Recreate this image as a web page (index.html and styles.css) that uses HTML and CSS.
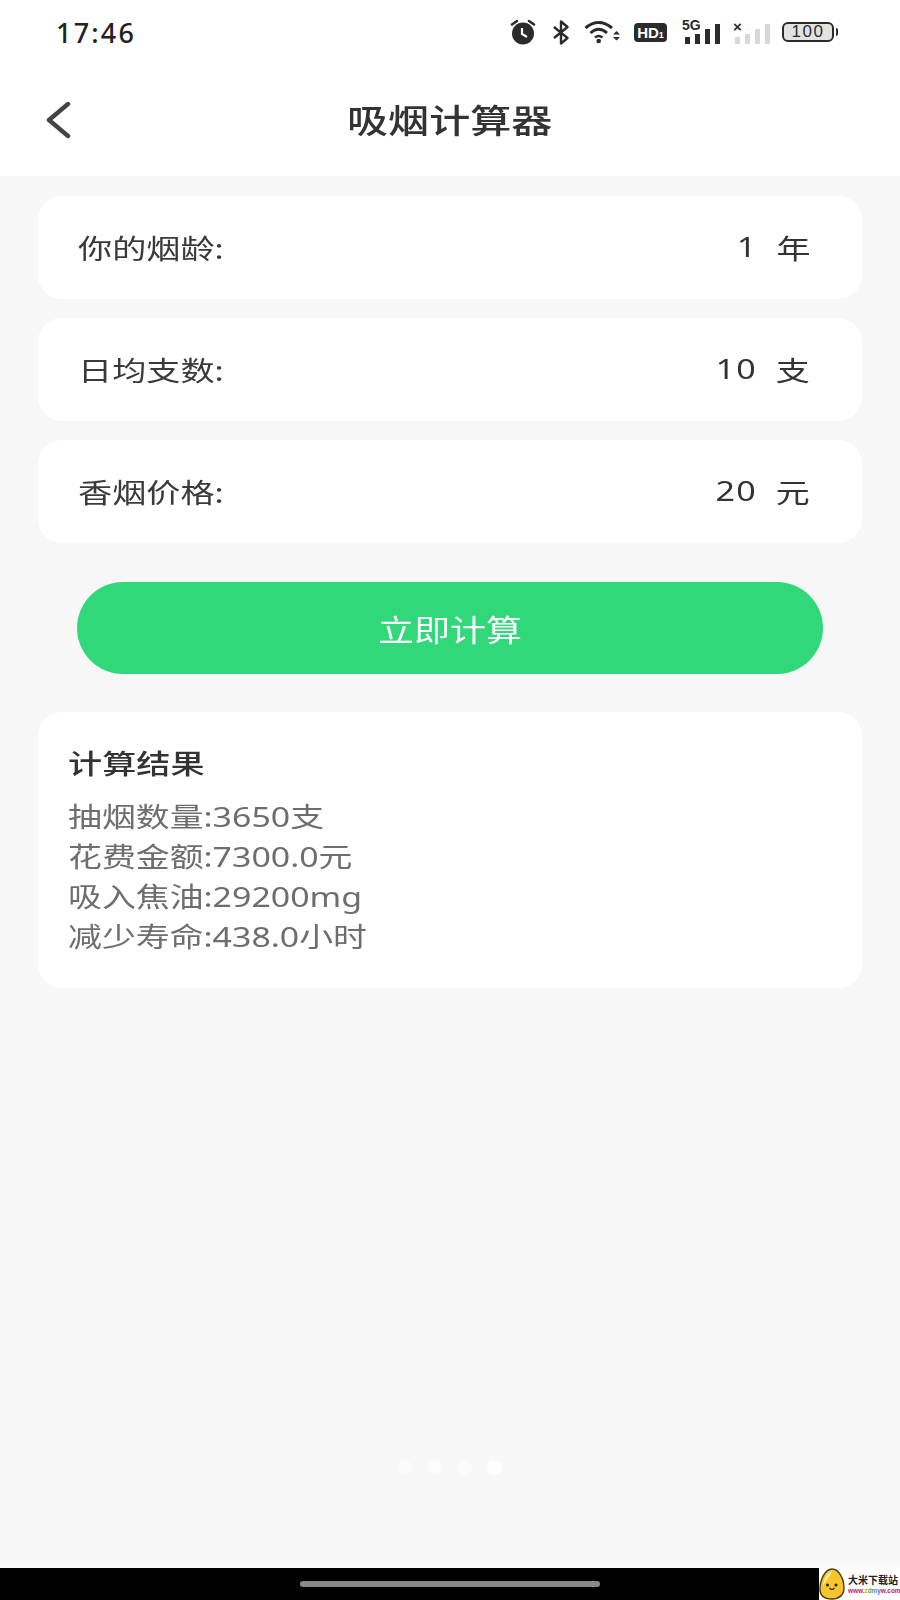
FILE: index.html
```html
<!DOCTYPE html>
<html lang="zh-CN">

<head>
    <meta charset="UTF-8">
    <meta name="viewport" content="width=device-width, initial-scale=1.0">
    <title>吸烟计算器</title>
    <link rel="stylesheet" href="styles.css">
</head>

<body>
    <div class="top">
        <div class="status-bar">
            <span class="time">17:46</span>
            <div class="status-icons">
                <svg class="ic alarm" width="28" height="26" viewBox="0 0 28 26">
                    <circle cx="14" cy="14.5" r="11" fill="#2b2b2b"/>
                    <path d="M3 5.5 L8 2 M25 5.5 L20 2" stroke="#2b2b2b" stroke-width="2.6" stroke-linecap="round"/>
                    <path d="M13 9 V15 L18 18" stroke="#fff" stroke-width="2.2" fill="none"/>
                </svg>
                <svg class="ic bt" width="18" height="25" viewBox="0 0 18 25">
                    <path d="M2 7 L15.5 18 L9 23.5 V1.5 L15.5 7 L2 18" stroke="#2b2b2b" stroke-width="2.4" fill="none" stroke-linejoin="round"/>
                </svg>
                <svg class="ic" width="38" height="24" viewBox="0 0 38 24">
                    <path d="M1.5 8 Q14.5 -3 28 8" stroke="#2b2b2b" stroke-width="3" fill="none"/>
                    <path d="M6.5 13 Q14.5 5.5 23 13" stroke="#2b2b2b" stroke-width="3" fill="none"/>
                    <path d="M11 17.5 Q14.5 14.5 18.5 17.5" stroke="#2b2b2b" stroke-width="2.6" fill="none"/>
                    <circle cx="14.7" cy="21" r="2.3" fill="#2b2b2b"/>
                    <path d="M29 14.5 L32.5 11 L36 14.5 Z M29 17 L32.5 20.5 L36 17 Z" fill="#2b2b2b"/>
                </svg>
                <div class="hd">HD<small>1</small></div>
                <div class="signal">
                    <span class="five-g">5G</span>
                    <i class="b1"></i><i class="b2"></i><i class="b3"></i><i class="b4"></i>
                </div>
                <div class="signal off">
                    <span class="cross">×</span>
                    <i class="b1"></i><i class="b2"></i><i class="b3"></i><i class="b4"></i>
                </div>
                <div class="battery"><div class="battery-body">100</div><div class="battery-tip"></div></div>
            </div>
        </div>
        <div class="title-bar">
            <svg class="back" width="28" height="38" viewBox="0 0 28 38">
                <path d="M23 3 L4 19 L23 35" stroke="#444" stroke-width="4.4" fill="none" stroke-linecap="round" stroke-linejoin="round"/>
            </svg>
            <h1 class="title"><span class="wide-t">吸烟计算器</span></h1>
        </div>
    </div>

    <div class="content">
        <div class="card row">
            <span class="label wide">你的烟龄:</span>
            <span class="value wide-r"><b>1</b><span>年</span></span>
        </div>
        <div class="card row">
            <span class="label wide">日均支数:</span>
            <span class="value wide-r"><b>10</b><span>支</span></span>
        </div>
        <div class="card row">
            <span class="label wide">香烟价格:</span>
            <span class="value wide-r"><b>20</b><span>元</span></span>
        </div>

        <button class="calc-btn"><span class="wide-c">立即计算</span></button>

        <div class="card result">
            <h2 class="wide">计算结果</h2>
            <p class="wide-p">抽烟数量:3650支</p>
            <p class="wide-p">花费金额:7300.0元</p>
            <p class="wide-p">吸入焦油:29200mg</p>
            <p class="wide-p">减少寿命:438.0小时</p>
        </div>

        <div class="dots"><i></i><i></i><i></i><i class="on"></i></div>
    </div>

    <div class="nav-bar">
        <div class="home-pill"></div>
        <div class="watermark">
            <svg class="egg" width="26" height="32" viewBox="0 0 26 32">
                <path d="M13 1 C20 1 25 11 25 20 C25 27 20 31 13 31 C5 31 1 27 1 21 C1 12 6 1 13 1 Z" fill="#f7c52c" stroke="#4a3a1a" stroke-width="1.4"/>
                <path d="M13 3.5 C9 3.5 5 11 4 18 C7 12 11 8 13 3.5 Z" fill="#fff3b0"/>
                <circle cx="8.5" cy="17" r="1.5" fill="#222"/>
                <circle cx="17" cy="17" r="1.5" fill="#222"/>
                <path d="M10.5 20 Q13 23 15.5 20" stroke="#222" stroke-width="1.2" fill="none"/>
            </svg>
            <div class="wm-text">
                <div class="wm-name">大米下载站</div>
                <div class="wm-url"><span class="u1">www.</span><span class="u2">z</span><span class="u3">d</span><span class="u4">m</span><span class="u5">y</span><span class="u1">w.com</span></div>
            </div>
        </div>
    </div>
</body>

</html>
```
FILE: styles.css
```css
* {
    box-sizing: border-box;
}

body {
    margin: 0;
    width: 900px;
    height: 1600px;
    display: flex;
    flex-direction: column;
    background: #f7f7f7;
    font-family: "Noto Sans", "Noto Sans CJK SC", sans-serif;
    color: #333;
    overflow: hidden;
}

/* text in the shot is stretched sideways */
.wide {
    display: inline-block;
    transform: scaleX(1.265);
    transform-origin: left center;
}

.wide-p {
    transform: scaleX(1.255);
    transform-origin: left center;
}

.wide-r {
    transform: scaleX(1.26);
    transform-origin: right center;
}

.wide-c {
    display: inline-block;
    transform: scaleX(1.2);
}

.wide-t {
    display: inline-block;
    transform: scaleX(1.245);
    transform-origin: left center;
}

.top {
    background: #fff;
    height: 176px;
}

.status-bar {
    height: 64px;
    display: flex;
    justify-content: space-between;
    align-items: center;
    padding: 0 62px 0 56px;
}

.time {
    font-size: 27px;
    font-weight: 500;
    letter-spacing: 2.2px;
    color: #222;
}

.status-icons {
    display: flex;
    align-items: center;
    gap: 12px;
}

.ic {
    display: block;
}

.alarm {
    margin-right: 3px;
}

.bt {
    margin-right: 2px;
}

.hd {
    width: 33px;
    height: 19px;
    margin-right: 3px;
    background: #2b2b2b;
    border-radius: 4px;
    color: #fff;
    font: bold 15px/19px "Liberation Sans", sans-serif;
    text-align: center;
    white-space: nowrap;
}

.hd small {
    font-size: 9px;
}

.signal {
    position: relative;
    width: 38px;
    height: 24px;
    display: flex;
    align-items: flex-end;
    justify-content: flex-end;
    gap: 5px;
}

.signal i {
    width: 5px;
    background: #2b2b2b;
}

.signal .b1 { height: 7px; }
.signal .b2 { height: 10px; }
.signal .b3 { height: 15px; }
.signal .b4 { height: 20px; }

.signal.off i {
    background: #d8d8d8;
}

.five-g {
    position: absolute;
    left: 0;
    top: -1px;
    font: bold 14px/13px "Liberation Sans", sans-serif;
    color: #2b2b2b;
}

.cross {
    position: absolute;
    left: 1px;
    top: -1px;
    font: bold 15px/15px "Liberation Sans", sans-serif;
    color: #2b2b2b;
}

.battery {
    display: flex;
    align-items: center;
    gap: 2px;
}

.battery-body {
    width: 52px;
    height: 20px;
    border: 2px solid #2b2b2b;
    border-radius: 6px;
    background: #e2e2e2;
    font: 17px/16px "Liberation Sans", sans-serif;
    letter-spacing: 1.5px;
    color: #2b2b2b;
    text-align: center;
}

.battery-tip {
    width: 2px;
    height: 8px;
    background: #2b2b2b;
    border-radius: 0 2px 2px 0;
}

.title-bar {
    position: relative;
    height: 112px;
    display: flex;
    align-items: center;
    justify-content: center;
}

.back {
    position: absolute;
    left: 45px;
    top: 37px;
}

.title {
    margin: 2px 0 0;
    font-size: 33px;
    font-weight: 500;
    width: 207px;
    line-height: 44px;
    color: #333;
    white-space: nowrap;
}

.content {
    flex: 1;
    position: relative;
    padding: 20px 38px 0;
    display: flex;
    flex-direction: column;
}

.card {
    background: #fff;
    border-radius: 24px;
}

.row {
    height: 103px;
    margin-bottom: 19px;
    padding: 0 52px 0 40px;
    display: flex;
    justify-content: space-between;
    align-items: center;
    font-size: 27px;
}

.label {
    color: #3a3a3a;
    white-space: nowrap;
}

.value {
    display: flex;
    gap: 15px;
    color: #333;
}

.value b {
    font-weight: 400;
    letter-spacing: 1px;
}

.calc-btn {
    align-self: center;
    width: 746px;
    height: 92px;
    margin-top: 20px;
    margin-bottom: 38px;
    border: none;
    border-radius: 46px;
    background: #30d87a;
    color: #fff;
    font-family: inherit;
    font-size: 30px;
}

.result {
    height: 276px;
    padding: 32px 30px;
    display: flex;
    flex-direction: column;
    align-items: flex-start;
}

.result h2 {
    margin: 0 0 13px;
    font-size: 27px;
    font-weight: 500;
    line-height: 40px;
    color: #333;
}

.result p {
    margin: 0;
    font-size: 27px;
    line-height: 40px;
    color: #6e6e6e;
    white-space: nowrap;
}

.dots {
    position: absolute;
    left: 397px;
    top: 1284px;
    display: flex;
    gap: 15px;
    filter: blur(1px);
}

.dots i {
    width: 15px;
    height: 15px;
    border-radius: 50%;
    background: #fbfbfb;
}

.dots i.on {
    background: #fff;
}

.nav-bar {
    position: relative;
    height: 32px;
    background: #000;
    box-shadow: 0 -4px 4px #fbfbfb;
    display: flex;
    justify-content: center;
    align-items: center;
}

.home-pill {
    width: 300px;
    height: 6px;
    border-radius: 3px;
    background: #888;
}

.watermark {
    position: absolute;
    right: 0;
    top: 0;
    width: 81px;
    height: 32px;
    background: #fff;
    display: flex;
    align-items: center;
    gap: 3px;
}

.egg {
    flex-shrink: 0;
}

.wm-name {
    font: bold 10px/13px "Noto Sans CJK SC", sans-serif;
    color: #222;
    white-space: nowrap;
}

.wm-url {
    font: bold 6.4px/9px "Liberation Sans", sans-serif;
    white-space: nowrap;
}

.u1 { color: #c0225a; }
.u2 { color: #e8a020; }
.u3 { color: #50b050; }
.u4 { color: #4a90d0; }
.u5 { color: #8050c0; }
```
